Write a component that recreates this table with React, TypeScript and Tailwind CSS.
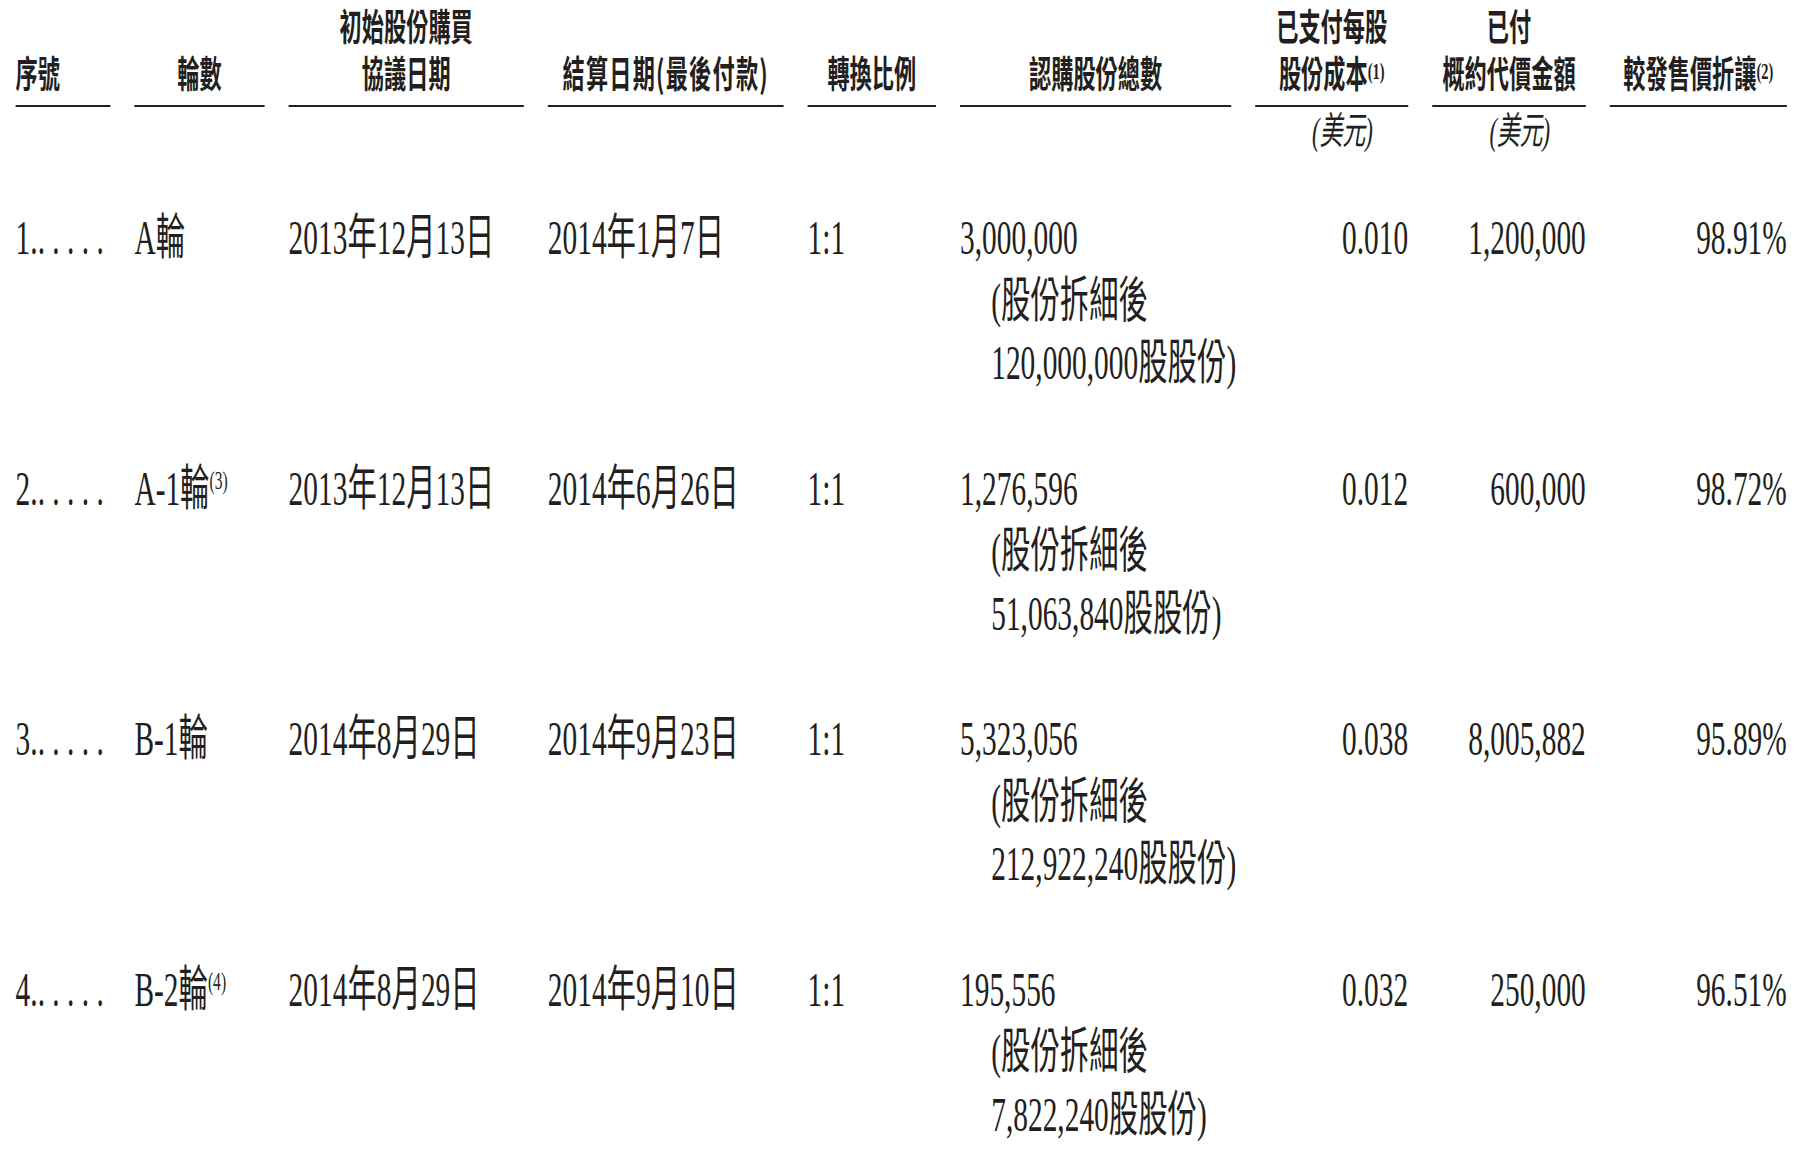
import React from 'react';

type Row = {
  no: string;
  round: string;
  note?: string;
  signDate: string;
  payDate: string;
  ratio: string;
  shares: string;
  split: string;
  cost: string;
  amount: string;
  discount: string;
};

const rows: Row[] = [
  { no: '1', round: 'A輪', signDate: '2013年12月13日', payDate: '2014年1月7日', ratio: '1:1', shares: '3,000,000', split: '120,000,000', cost: '0.010', amount: '1,200,000', discount: '98.91%' },
  { no: '2', round: 'A-1輪', note: '(3)', signDate: '2013年12月13日', payDate: '2014年6月26日', ratio: '1:1', shares: '1,276,596', split: '51,063,840', cost: '0.012', amount: '600,000', discount: '98.72%' },
  { no: '3', round: 'B-1輪', signDate: '2014年8月29日', payDate: '2014年9月23日', ratio: '1:1', shares: '5,323,056', split: '212,922,240', cost: '0.038', amount: '8,005,882', discount: '95.89%' },
  { no: '4', round: 'B-2輪', note: '(4)', signDate: '2014年8月29日', payDate: '2014年9月10日', ratio: '1:1', shares: '195,556', split: '7,822,240', cost: '0.032', amount: '250,000', discount: '96.51%' },
];

// the source is a horizontally squeezed prospectus page, so the table is laid out wide and scaled on x
const cols = 'grid grid-cols-[158px_217px_392px_393px_214px_452px_255px_256px_295px] gap-x-[40px]';
const head = 'border-b-2 border-[#231f20] pb-[9px]';

function HeadNote({ children }: { children: React.ReactNode }) {
  return (
    <span className="font-['Liberation_Serif',serif] text-[24px] leading-none align-[9px] font-bold">
      {children}
    </span>
  );
}

function TableHeader() {
  return (
    <>
      <div className={`${cols} items-end pt-[2px] font-['Noto_Sans_CJK_TC',sans-serif] font-bold text-[37px] leading-[47px]`}>
        <div className={head}>序號</div>
        <div className={`${head} text-center`}>輪數</div>
        <div className={`${head} text-center`}>
          <div>初始股份購買</div>
          <div>協議日期</div>
        </div>
        <div className={`${head} text-center tracking-[2px]`}>結算日期(最後付款)</div>
        <div className={`${head} text-center`}>轉換比例</div>
        <div className={`${head} text-center`}>認購股份總數</div>
        <div className={`${head} text-center`}>
          <div>已支付每股</div>
          <div>
            股份成本<HeadNote>(1)</HeadNote>
          </div>
        </div>
        <div className={`${head} text-center`}>
          <div>已付</div>
          <div>概約代價金額</div>
        </div>
        <div className={`${head} text-center`}>
          較發售價折讓<HeadNote>(2)</HeadNote>
        </div>
      </div>
      <div className={`${cols} font-['Liberation_Serif','Noto_Sans_CJK_TC',serif] italic text-[38px] leading-[48px]`}>
        <div className="col-start-7 text-center pl-[36px]">(美元)</div>
        <div className="text-center pl-[36px]">(美元)</div>
      </div>
    </>
  );
}

function TableRow({ row }: { row: Row }) {
  return (
    <div className={`${cols} items-baseline`}>
      <div className="whitespace-pre">{row.no}.. . . . .</div>
      <div className="whitespace-nowrap">
        {row.round}
        {row.note && <span className="text-[26px] leading-none align-[16px]">{row.note}</span>}
      </div>
      <div className="whitespace-nowrap">{row.signDate}</div>
      <div className="whitespace-nowrap">{row.payDate}</div>
      <div>{row.ratio}</div>
      <div className="whitespace-nowrap">
        <div>{row.shares}</div>
        <div className="pl-[52px]">(股份拆細後</div>
        <div className="pl-[52px]">{row.split}股股份)</div>
      </div>
      <div className="text-right">{row.cost}</div>
      <div className="text-right">{row.amount}</div>
      <div className="text-right">{row.discount}</div>
    </div>
  );
}

export default function App() {
  return (
    <div className="w-[1812px] h-[1150px] overflow-hidden bg-white text-[#231f20]">
      <div className="w-[3020px] pl-[26px] origin-top-left scale-x-[0.6]">
        <TableHeader />
        <div className="mt-[52px] flex flex-col gap-y-[63px] font-['Liberation_Serif','Noto_Sans_CJK_TC',serif] text-[49px] leading-[62.5px]">
          {rows.map((r) => (
            <TableRow key={r.no} row={r} />
          ))}
        </div>
      </div>
    </div>
  );
}
